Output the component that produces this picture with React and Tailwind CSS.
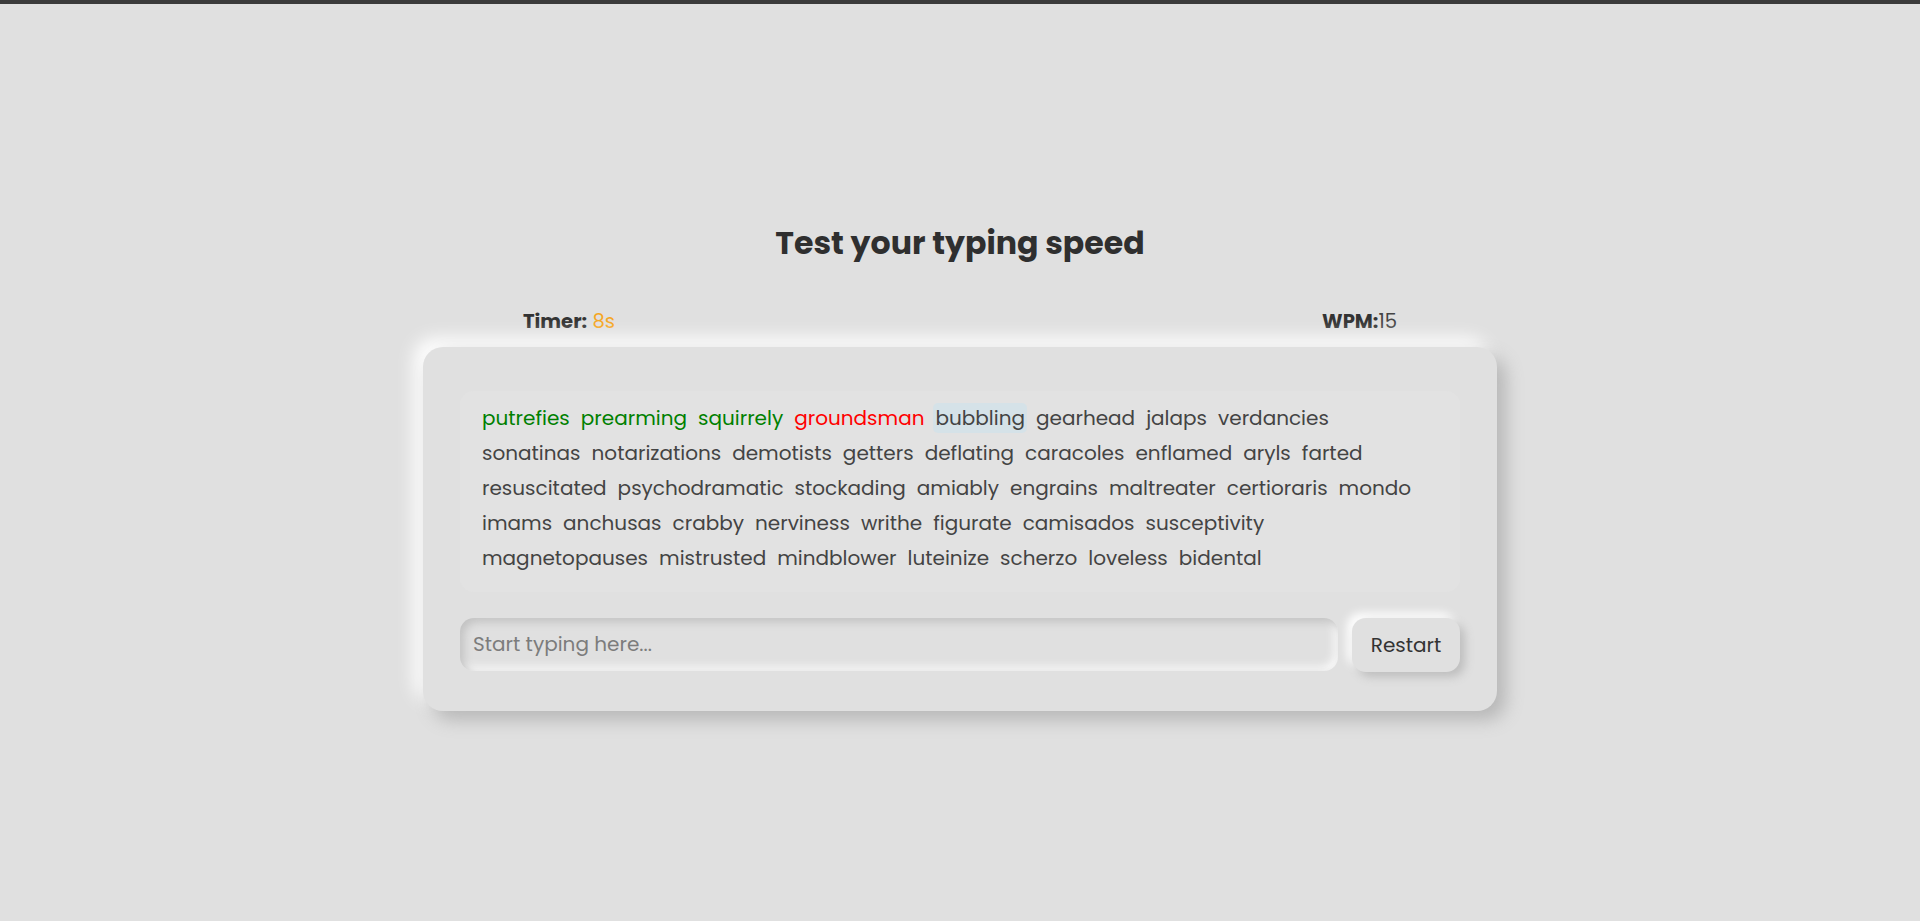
import React, { useState } from "react";

// word list — split into the rows shown on screen
const lines = [
  ["putrefies", "prearming", "squirrely", "groundsman", "bubbling", "gearhead", "jalaps", "verdancies"],
  ["sonatinas", "notarizations", "demotists", "getters", "deflating", "caracoles", "enflamed", "aryls", "farted"],
  ["resuscitated", "psychodramatic", "stockading", "amiably", "engrains", "maltreater", "certioraris", "mondo"],
  ["imams", "anchusas", "crabby", "nerviness", "writhe", "figurate", "camisados", "susceptivity"],
  ["magnetopauses", "mistrusted", "mindblower", "luteinize", "scherzo", "loveless", "bidental"],
];

// status of typed words: 0-2 correct, 3 wrong, 4 current
const status = ["ok", "ok", "ok", "bad", "current"];

const TypingTest = () => {
  const [value, setValue] = useState("");

  let index = -1;

  return (
    <div className="min-h-screen bg-[#e0e0e0] font-['Poppins','Open_Sans',sans-serif] text-[#333]">
      <div className="h-[4px] bg-[#3b3b3b]" />

      <div className="flex flex-col items-center pt-[215px]">
        <h1 className="text-[31.6px] leading-[48px] font-bold text-[#2f2f2f]">
          Test your typing speed
        </h1>

        {/* stats */}
        <div className="w-[874px] flex justify-between mt-[40px] text-[19.6px] leading-[28px]">
          <div>
            <span className="font-bold">Timer:</span>{" "}
            <span className="text-[#f5a623]">8s</span>
          </div>
          <div>
            <span className="font-bold">WPM:</span>
            <span className="text-[#444]">15</span>
          </div>
        </div>

        {/* card */}
        <div className="w-[1074px] mt-[12px] bg-[#e0e0e0] rounded-[20px] px-[37px] pt-[44px] pb-[39px] shadow-[9px_9px_18px_#b7b7b7,-9px_-9px_18px_#ffffff]">
          <div className="bg-[#e2e2e2] rounded-[14px] px-[20px] pt-[9px] pb-[16px]">
            {lines.map((line, li) => (
              <div key={li} className="flex">
                {line.map((word) => {
                  index += 1;
                  const s = status[index];
                  return (
                    <span
                      key={word}
                      className={`text-[20px] leading-[28px] my-[2.6px] py-px px-[2px] mr-[7px] rounded-[5px] ${
                        s === "ok"
                          ? "text-[#008000]"
                          : s === "bad"
                          ? "text-[#ff0000]"
                          : s === "current"
                          ? "text-[#444] bg-[#d5e2e8]"
                          : "text-[#444]"
                      }`}
                    >
                      {word}
                    </span>
                  );
                })}
              </div>
            ))}
          </div>

          <div className="flex gap-[14px] mt-[26px]">
            <input
              autoFocus
              value={value}
              onChange={(e) => setValue(e.target.value)}
              placeholder="Start typing here..."
              className="flex-1 h-[53px] px-[13px] rounded-[14px] bg-[#e0e0e0] text-[20px] text-[#333] placeholder:text-[#7c7c7c] outline-none shadow-[inset_4px_4px_8px_#c2c2c2,inset_-4px_-4px_8px_#fafafa]"
            />
            <button className="w-[108px] h-[54px] rounded-[14px] bg-[#e0e0e0] text-[20px] text-[#333] shadow-[5px_5px_10px_#bebebe,-5px_-5px_10px_#ffffff]">
              Restart
            </button>
          </div>
        </div>
      </div>
    </div>
  );
};

export default TypingTest;
